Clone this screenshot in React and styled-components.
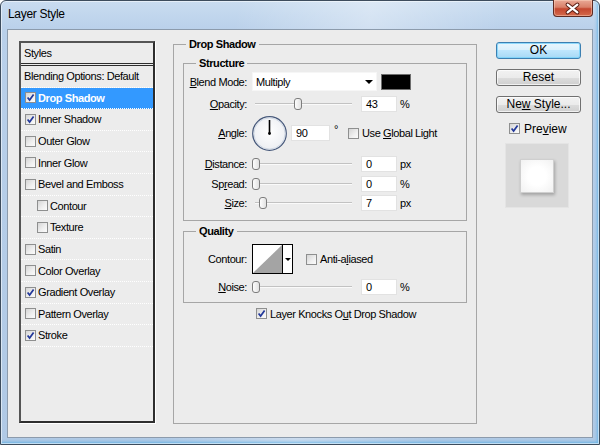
import React from 'react';
import styled, { createGlobalStyle } from 'styled-components';

const GlobalStyle = createGlobalStyle`
  html, body {
    margin: 0;
    padding: 0;
  }
  body {
    width: 600px;
    height: 445px;
    overflow: hidden;
    font-family: "Liberation Sans", Arial, sans-serif;
    font-size: 11px;
    letter-spacing: -0.4px;
    color: #000;
  }
`;

const effects = [
  { name: 'Blending Options: Default', plain: true },
  { name: 'Drop Shadow', checked: true, selected: true },
  { name: 'Inner Shadow', checked: true },
  { name: 'Outer Glow' },
  { name: 'Inner Glow' },
  { name: 'Bevel and Emboss' },
  { name: 'Contour', sub: true },
  { name: 'Texture', sub: true },
  { name: 'Satin' },
  { name: 'Color Overlay' },
  { name: 'Gradient Overlay', checked: true },
  { name: 'Pattern Overlay' },
  { name: 'Stroke', checked: true },
];

function App() {
  return (
    <>
      <GlobalStyle />
      <Window>
        <TitleBar>
          <Title>Layer Style</Title>
          <CloseButton>
            <svg width="40" height="17" viewBox="0 0 40 17">
              <path d="M15 4.5 L25 12.5 M25 4.5 L15 12.5" stroke="#5a1e14" strokeWidth="4.2" strokeLinecap="round" />
              <path d="M15 4.5 L25 12.5 M25 4.5 L15 12.5" stroke="#fff" strokeWidth="2.2" strokeLinecap="round" />
            </svg>
          </CloseButton>
        </TitleBar>

        <Client>
          <StylesPanel>
            <PanelHeader>Styles</PanelHeader>
            {effects.map(fx => (
              <StyleRow
                key={fx.name}
                $selected={fx.selected}
                $indent={fx.plain ? 3 : fx.sub ? 16 : 4}
              >
                {!fx.plain && <Check on={fx.checked} />}
                <span>{fx.name}</span>
              </StyleRow>
            ))}
          </StylesPanel>

          <EffectGroup>
            <Legend $offset={3}>Drop Shadow</Legend>

            <SubGroup $top={1} $pt={2} $pb={9}>
              <Legend $offset={12}>Structure</Legend>
              <Row $h={19} $mt={0}>
                <Label><Key>B</Key>lend Mode:</Label>
                <Select>
                  Multiply
                  <Caret />
                </Select>
                <Swatch />
              </Row>
              <Row $h={16} $mt={5}>
                <Label><Key>O</Key>pacity:</Label>
                <Slider value={43} />
                <Field>43</Field>
                <Unit>%</Unit>
              </Row>
              <Row $h={36} $mt={3}>
                <Label><Key>A</Key>ngle:</Label>
                <Dial />
                <Field $w={39}>90</Field>
                <Degree>°</Degree>
                <CheckLabel $gap={10}>
                  <Check />
                  <span>Use <Key>G</Key>lobal Light</span>
                </CheckLabel>
              </Row>
              <Row $h={16} $mt={5}>
                <Label><Key>D</Key>istance:</Label>
                <Slider value={0} />
                <Field>0</Field>
                <Unit>px</Unit>
              </Row>
              <Row $h={16} $mt={4}>
                <Label>Sp<Key>r</Key>ead:</Label>
                <Slider value={0} />
                <Field>0</Field>
                <Unit>%</Unit>
              </Row>
              <Row $h={16} $mt={3}>
                <Label><Key>S</Key>ize:</Label>
                <Slider value={7} />
                <Field>7</Field>
                <Unit>px</Unit>
              </Row>
            </SubGroup>

            <SubGroup $top={4} $pt={4} $pb={7}>
              <Legend $offset={12}>Quality</Legend>
              <Row $h={30} $mt={2}>
                <Label>Contour:</Label>
                <ContourPicker>
                  <svg width="29" height="28" viewBox="0 0 29 28">
                    <rect width="29" height="28" fill="#fff" />
                    <polygon points="0,28 29,0 29,28" fill="#a4a4a4" />
                  </svg>
                  <PickerArrow>
                    <Caret />
                  </PickerArrow>
                </ContourPicker>
                <CheckLabel $gap={13}>
                  <Check />
                  <span>Anti-a<Key>l</Key>iased</span>
                </CheckLabel>
              </Row>
              <Row $h={16} $mt={5}>
                <Label><Key>N</Key>oise:</Label>
                <Slider value={0} />
                <Field>0</Field>
                <Unit>%</Unit>
              </Row>
            </SubGroup>

            <KnockRow>
              <Check on />
              <span>Layer Knocks O<Key>u</Key>t Drop Shadow</span>
            </KnockRow>
          </EffectGroup>

          <Side>
            <Button $primary>OK</Button>
            <Button>Reset</Button>
            <Button>Ne<Key>w</Key> Style...</Button>
            <PreviewToggle>
              <Check on />
              <span>Pre<Key>v</Key>iew</span>
            </PreviewToggle>
            <PreviewSwatch>
              <PreviewChip />
            </PreviewSwatch>
          </Side>
        </Client>
      </Window>
    </>
  );
}

function Check({ on }) {
  return (
    <Box>
      {on && (
        <svg width="9" height="9" viewBox="0 0 9 9">
          <path d="M1.6 4.4 L3.6 7 L7.6 1.4" stroke="#22389a" strokeWidth="1.7" fill="none" />
        </svg>
      )}
    </Box>
  );
}

function Slider({ value, max = 100 }) {
  return (
    <SliderWrap>
      <Track />
      <Thumb style={{ left: 4 + (value / max) * 97 }} />
    </SliderWrap>
  );
}

function Dial() {
  return (
    <DialWrap>
      <svg width="35" height="35" viewBox="0 0 35 35">
        <defs>
          <radialGradient id="dialFill" cx="50%" cy="45%" r="55%">
            <stop offset="0%" stopColor="#ffffff" />
            <stop offset="100%" stopColor="#eceef2" />
          </radialGradient>
        </defs>
        <circle cx="17.5" cy="17.5" r="16.8" fill="url(#dialFill)" stroke="#46587a" strokeWidth="1.2" />
        <circle cx="17.5" cy="17.5" r="15.6" fill="none" stroke="#c7d0de" strokeWidth="0.8" />
        <line x1="17.5" y1="17.5" x2="17.5" y2="4" stroke="#000" strokeWidth="1.6" />
        <circle cx="17.5" cy="17.5" r="1.4" fill="#000" />
      </svg>
    </DialWrap>
  );
}

const Window = styled.div`
  width: 600px;
  height: 445px;
  box-sizing: border-box;
  display: flex;
  flex-direction: column;
  padding: 0 6px 6px 6px;
  border: 1px solid #3d4c5d;
  border-radius: 6px 6px 0 0;
  background:
    linear-gradient(100deg, rgba(255,255,255,0) 35%, rgba(255,255,255,0.35) 55%, rgba(255,255,255,0) 75%),
    linear-gradient(180deg, #c9dcf0 0%, #b9d0ea 30px, #b0c9e5 100%);
  box-shadow: inset 0 0 0 1px rgba(255,255,255,0.55), inset -2px -2px 3px rgba(40,160,230,0.5);
`;

const TitleBar = styled.div`
  height: 28px;
  flex: none;
  display: flex;
  justify-content: space-between;
  align-items: flex-start;
  padding-left: 1px;
`;

const Title = styled.div`
  margin-top: 6px;
  font-size: 12px;
  line-height: 15px;
  letter-spacing: -0.3px;
`;

const CloseButton = styled.div`
  width: 40px;
  height: 17px;
  margin-top: -1px;
  box-sizing: border-box;
  border: 1px solid #5e2a22;
  border-top: none;
  border-radius: 0 0 4px 4px;
  background: linear-gradient(180deg, #e9a996 0%, #d98069 45%, #c4472f 55%, #d46a4c 100%);
  box-shadow: inset 0 0 0 1px rgba(255,220,200,0.45);
  display: flex;
  svg {
    display: block;
    margin-left: -1px;
  }
`;

const Client = styled.div`
  flex: 1;
  display: flex;
  align-items: flex-start;
  padding: 11px 11px 0 11px;
  background: #ececec;
  border: 1px solid #8c9bac;
`;

const StylesPanel = styled.div`
  width: 136px;
  height: 382px;
  flex: none;
  box-sizing: border-box;
  border: 2px solid;
  border-color: #555 #2e2e2e #2e2e2e #555;
  box-shadow: 1px 1px 0 #fff;
  background: #ececec;
  white-space: nowrap;
`;

const PanelHeader = styled.div`
  height: 20px;
  line-height: 20px;
  padding-left: 3px;
  border-bottom: 3px double #2e2e2e;
`;

const StyleRow = styled.div`
  height: 21.6px;
  box-sizing: border-box;
  display: flex;
  align-items: center;
  gap: 2px;
  padding-left: ${p => p.$indent}px;
  border-bottom: 1px dotted #fff;
  background: ${p => (p.$selected ? '#3399ff' : 'transparent')};
  color: ${p => (p.$selected ? '#fff' : '#000')};
  font-weight: ${p => (p.$selected ? 'bold' : 'normal')};
`;

const Box = styled.span`
  width: 11px;
  height: 11px;
  flex: none;
  box-sizing: border-box;
  border: 1px solid #8e8f8f;
  background: linear-gradient(135deg, #d5d5d5 0%, #f0f0f0 60%, #fbfbfb 100%);
  display: inline-flex;
  align-items: center;
  justify-content: center;
  svg {
    display: block;
  }
`;

const Key = styled.span`
  text-decoration: underline;
`;

const EffectGroup = styled.fieldset`
  width: 304px;
  height: 386px;
  flex: none;
  box-sizing: border-box;
  margin: -3px 0 0 18px;
  padding: 5px 9px 0 9px;
  border: 1px solid #a6a6a6;
  min-inline-size: 0;
`;

const SubGroup = styled.fieldset`
  margin: ${p => p.$top}px 0 0 0;
  padding: ${p => p.$pt}px 0 ${p => p.$pb}px 0;
  border: 1px solid #a6a6a6;
  min-inline-size: 0;
`;

const Legend = styled.legend`
  margin-left: ${p => p.$offset}px;
  padding: 0 3px;
  font-weight: bold;
  line-height: 13px;
`;

const Row = styled.div`
  display: flex;
  align-items: center;
  height: ${p => p.$h}px;
  margin-top: ${p => p.$mt}px;
  white-space: nowrap;
`;

const Label = styled.span`
  width: 63px;
  flex: none;
  margin-right: 5px;
  text-align: right;
`;

const Select = styled.div`
  width: 125px;
  height: 19px;
  flex: none;
  box-sizing: border-box;
  padding: 0 3px;
  display: flex;
  align-items: center;
  justify-content: space-between;
  background: #fff;
  border: 1px solid #f6f6f6;
`;

const Caret = styled.span`
  width: 0;
  height: 0;
  border-left: 4px solid transparent;
  border-right: 4px solid transparent;
  border-top: 4px solid #000;
`;

const Swatch = styled.div`
  width: 30px;
  height: 16px;
  margin-left: 4px;
  box-sizing: border-box;
  background: #000;
  border: 1px solid #6e6e6e;
`;

const SliderWrap = styled.div`
  position: relative;
  width: 105px;
  height: 16px;
  flex: none;
`;

const Track = styled.div`
  position: absolute;
  left: 3px;
  right: 5px;
  top: 7px;
  height: 1px;
  background: #c2c2c2;
  border-bottom: 1px solid #fafafa;
`;

const Thumb = styled.div`
  position: absolute;
  top: 2px;
  width: 8px;
  height: 12px;
  margin-left: -4px;
  box-sizing: border-box;
  border: 1px solid #7d7d7d;
  border-radius: 3px;
  background: linear-gradient(90deg, #fdfdfd, #e2e2e2);
`;

const Field = styled.div`
  width: ${p => p.$w || 36}px;
  height: 16px;
  margin-left: 4px;
  flex: none;
  box-sizing: border-box;
  padding-left: 4px;
  line-height: 14px;
  background: #fff;
  border: 1px solid #e2e2e2;
`;

const Unit = styled.span`
  margin-left: 3px;
`;

const Degree = styled.span`
  margin-left: 4px;
  align-self: flex-start;
  margin-top: 8px;
`;

const DialWrap = styled.div`
  width: 35px;
  height: 35px;
  flex: none;
  svg {
    display: block;
  }
`;

const CheckLabel = styled.label`
  display: flex;
  align-items: center;
  gap: 3px;
  margin-left: ${p => p.$gap}px;
`;

const ContourPicker = styled.div`
  display: flex;
  flex: none;
  height: 30px;
  box-sizing: border-box;
  border: 1px solid #000;
  svg {
    display: block;
  }
`;

const PickerArrow = styled.div`
  width: 9px;
  border-left: 1px solid #000;
  background: #fff;
  display: flex;
  align-items: center;
  justify-content: center;
  ${Caret} {
    border-left-width: 3px;
    border-right-width: 3px;
    border-top-width: 3px;
  }
`;

const KnockRow = styled.label`
  display: flex;
  align-items: center;
  gap: 3px;
  height: 13px;
  margin-top: 4px;
  padding-left: 73px;
  white-space: nowrap;
`;

const Side = styled.div`
  width: 85px;
  flex: none;
  margin: 1px 0 0 19px;
  display: flex;
  flex-direction: column;
`;

const Button = styled.button`
  width: 85px;
  height: 17px;
  margin: 0 0 10px 0;
  padding: 0;
  font-family: "Liberation Sans", Arial, sans-serif;
  font-size: 12px;
  line-height: 15px;
  letter-spacing: 0;
  color: #000;
  border: 1px solid ${p => (p.$primary ? '#3c7fb1' : '#707070')};
  border-radius: 3px;
  background: ${p =>
    p.$primary
      ? 'linear-gradient(180deg, #eaf6fd 0%, #d9f0fc 50%, #bee6fd 50%, #a7d9f5 100%)'
      : 'linear-gradient(180deg, #f2f2f2 0%, #ebebeb 50%, #dddddd 50%, #cfcfcf 100%)'};
  box-shadow: inset 0 0 0 1px ${p => (p.$primary ? 'rgba(120,210,250,0.8)' : 'rgba(255,255,255,0.7)')};
`;

const PreviewToggle = styled.label`
  display: flex;
  align-items: center;
  gap: 4px;
  height: 13px;
  margin: -1px 0 0 13px;
  font-size: 12px;
  letter-spacing: 0;
`;

const PreviewSwatch = styled.div`
  width: 64px;
  height: 65px;
  margin: 8px 0 0 9px;
  box-sizing: border-box;
  border: 1px solid #e4e4e4;
  background-color: #d9d9d9;
  background-image: radial-gradient(#e2e2e2 0.6px, transparent 0.7px);
  background-size: 2px 2px;
  display: flex;
  align-items: center;
  justify-content: center;
`;

const PreviewChip = styled.div`
  width: 34px;
  height: 34px;
  box-sizing: border-box;
  border: 1px solid #cfcfcf;
  background: radial-gradient(circle, #ffffff 40%, #f1f1f1 100%);
  box-shadow: 1px 2px 3px rgba(0, 0, 0, 0.25);
`;

export default App;
